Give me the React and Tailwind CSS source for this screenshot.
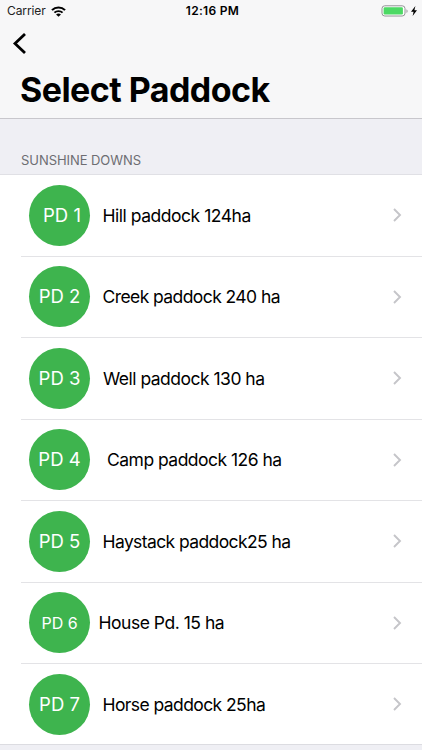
import React from 'react'

const paddocks = [
    { code: 'PD 1', name: 'Hill paddock 124ha', badge: 'pl-[5px] text-[18.5px]', label: 'ml-[12.5px] tracking-[-0.47px]' },
    { code: 'PD 2', name: 'Creek paddock 240 ha', badge: 'text-[18.5px]', label: 'ml-[12.5px] tracking-[-0.58px]' },
    { code: 'PD 3', name: 'Well paddock 130 ha', badge: 'text-[18.5px]', label: 'ml-[13px] tracking-[-0.51px]' },
    { code: 'PD 4', name: 'Camp paddock 126 ha', badge: 'text-[18.5px]', label: 'ml-[17px] tracking-[-0.52px]' },
    { code: 'PD 5', name: 'Haystack paddock25 ha', badge: 'text-[18.5px]', label: 'ml-[12.5px] tracking-[-0.6px]' },
    { code: 'PD 6', name: 'House Pd. 15 ha', badge: 'text-[16px]', label: 'ml-[8.5px] tracking-[-0.48px]' },
    { code: 'PD 7', name: 'Horse paddock 25ha', badge: 'text-[18.5px]', label: 'ml-[12.5px] tracking-[-0.58px]' }
]

const WifiIcon = () => (
    <svg width="15" height="11" viewBox="0 0 14 11" preserveAspectRatio="none" className="ml-[5px]">
        <path d="M.9 4.1a8.6 8.6 0 0 1 12.2 0" fill="none" stroke="#000" strokeWidth="2" />
        <path d="M3.2 6.7a5.4 5.4 0 0 1 7.6 0" fill="none" stroke="#000" strokeWidth="1.8" />
        <path d="M7 10.8 4.7 8.6a3.2 3.2 0 0 1 4.6 0Z" />
    </svg>
)

const BatteryIcon = () => (
    <svg width="38" height="13" viewBox="0 0 38 13">
        <rect x="1" y=".8" width="23" height="10.2" rx="2.8" fill="#fff" stroke="#929294" />
        <rect x="2.6" y="2.3" width="19.3" height="7.2" rx="1.2" fill="#4cd964" />
        <path d="M25.5 4.2c1.4.6 1.4 3.2 0 3.8Z" fill="#929294" />
        <path d="M34.4 1 30 6.7h2.6l-1 4.4L36 5.2h-2.6Z" />
    </svg>
)

const PaddockRow = ({ paddock }) => (
    <li className="group h-[81.5px] pl-[21px] last:h-[81px] last:pl-0">
        <div className="flex h-full justify-between border-b border-[#e3e3e6] pr-[20px] pl-[8px] group-last:border-[#dcdce1] group-last:pl-[29px]">
            <div className="flex pt-[9.5px]">
                <div className={`flex size-[61px] shrink-0 items-center justify-center rounded-full bg-[#3eb44e] pt-px text-white ${paddock.badge}`}>
                    {paddock.code}
                </div>
                <span className={`flex h-[63px] items-center text-[17.5px] whitespace-nowrap ${paddock.label}`}>{paddock.name}</span>
            </div>
            <svg width="10" height="16" viewBox="0 0 10 16" className="mt-[32px]">
                <path d="m2 2 6 6-6 6" fill="none" stroke="#c5c5c9" strokeWidth="1.9" />
            </svg>
        </div>
    </li>
)

const App = () => (
    <div className="h-[750px] w-[422px] overflow-hidden bg-[#efeff4] font-['Inter',sans-serif] text-black">
        <header className="h-[119px] border-b border-[#c8c7cc] bg-[#f7f7f8]">
            {/* Status bar */}
            <div className="grid h-[22px] grid-cols-3 items-center pr-[3px] pl-[7px]">
                <div className="flex items-center text-[12px] tracking-[-0.1px] text-[#222]">
                    Carrier
                    <WifiIcon />
                </div>
                <span className="pr-[1px] text-center text-[12px] font-semibold tracking-[0.3px]">12:16 PM</span>
                <div className="flex justify-end">
                    <BatteryIcon />
                </div>
            </div>
            <button className="block h-[44px] pl-[11px]" aria-label="Back">
                <svg width="18" height="24" viewBox="0 0 18 24">
                    <path d="M14 2 4 11.5 14 21" fill="none" stroke="#000" strokeWidth="2.8" />
                </svg>
            </button>
            <h1 className="pt-[4px] pl-[20px] text-[34px] leading-[40px] font-bold tracking-[-0.55px]">Select Paddock</h1>
        </header>
        <h2 className="h-[56px] border-b border-[#e0e0e5] pt-[32px] pl-[21px] text-[13px] leading-[18px] tracking-[-0.06px] text-[#6d6d72]">SUNSHINE DOWNS</h2>
        <ul className="bg-white">
            {paddocks.map(paddock => (
                <PaddockRow key={paddock.code} paddock={paddock} />
            ))}
        </ul>
    </div>
)

export default App
